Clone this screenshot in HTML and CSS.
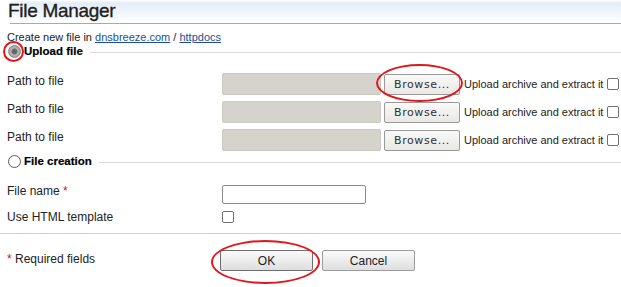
FILE: index.html
```html
<html lang="en">
<head>
    <meta charset="UTF-8">
    <title>File Manager</title>
    <link rel="stylesheet" href="styles.css">
</head>
<body>
	<div class="header">
		<h1>File Manager</h1>
	</div>

	<div class="content">
		<div class="path">Create new file in <a href="#">dnsbreeze.com</a> / <a href="#">httpdocs</a></div>

		<div class="legend">
			<span class="radio_wrap">
				<span class="radio checked"></span>
				<span class="mark mark_radio"></span>
			</span>
			<span class="legend_text">Upload file</span>
			<span class="legend_line"></span>
		</div>

		<div class="row file_row first_row">
			<label class="label">Path to file</label>
			<input type="text" class="file_input" disabled>
			<span class="btn_wrap">
				<button class="browse">Browse...</button>
				<span class="mark mark_browse"></span>
			</span>
			<span class="extract">Upload archive and extract it</span>
			<input type="checkbox" class="checkbox">
		</div>
		<div class="row file_row">
			<label class="label">Path to file</label>
			<input type="text" class="file_input" disabled>
			<button class="browse">Browse...</button>
			<span class="extract">Upload archive and extract it</span>
			<input type="checkbox" class="checkbox">
		</div>
		<div class="row file_row">
			<label class="label">Path to file</label>
			<input type="text" class="file_input" disabled>
			<button class="browse">Browse...</button>
			<span class="extract">Upload archive and extract it</span>
			<input type="checkbox" class="checkbox">
		</div>

		<div class="legend legend_create">
			<span class="radio_wrap">
				<span class="radio"></span>
			</span>
			<span class="legend_text">File creation</span>
			<span class="legend_line"></span>
		</div>

		<div class="row name_row">
			<label class="label">File name <span class="req">*</span></label>
			<input type="text" class="name_input">
		</div>
		<div class="row tpl_row">
			<label class="label">Use HTML template</label>
			<input type="checkbox" class="checkbox tpl_check">
		</div>
	</div>

	<div class="separator"></div>

	<div class="content">
		<div class="row buttons_row">
			<label class="label"><span class="req">*</span> Required fields</label>
			<span class="btn_wrap">
				<button class="btn ok">OK</button>
				<span class="mark mark_ok"></span>
			</span>
			<button class="btn cancel">Cancel</button>
		</div>
	</div>
</body>
</html>
```

FILE: styles.css
```css
	*{
		margin: 0;
		padding: 0;
		box-sizing: border-box;
	}
    body {
        font-family: "Liberation Sans", Arial, sans-serif;
        font-size: 12px;
        color: #222;
        margin: 0;
        width: 621px;
        overflow: hidden;
    }
    .header {
    	margin-left: 10px;
    	height: 24px;
    	border-bottom: 1px solid #a6aaae;
    	background: linear-gradient(to bottom, #fff 0px, #e3edf7 3px, #f3f7fb 15px, #fff 22px);
    }
    .header h1 {
    	margin-left: -2px;
    	font-size: 19px;
    	letter-spacing: -0.3px;
    	font-weight: normal;
    	line-height: 22px;
    	color: #1e1e1e;
    	-webkit-text-stroke: 0.35px #1e1e1e;
    }
    .content {
    	padding-left: 7px;
    }
    .path {
    	margin-top: 6px;
    	height: 14px;
    	line-height: 14px;
    	font-size: 11px;
    }
    .path a {
    	color: #1b4f9c;
    }
    .legend {
    	display: flex;
    	align-items: center;
    	height: 14px;
    }
    .radio_wrap {
    	position: relative;
    	display: flex;
    	width: 13px;
    	height: 13px;
    	margin-left: 1px;
    	margin-right: 3px;
    }
    .radio {
    	width: 13px;
    	height: 13px;
    	border-radius: 50%;
    	border: 1px solid #5a5a5a;
    	background: #fff;
    }
    .radio.checked {
    	border-color: #8c8c8c;
    	background: radial-gradient(circle, #5f5f5f 0, #6d6d6d 2.5px, #b8b8b8 3.5px, #9a9a9a 6px);
    }
    .legend_text {
    	font-size: 11.5px;
    	font-weight: bold;
    	color: #000;
    	-webkit-text-stroke: 0.2px #000;
    }
    .legend_line {
    	flex: 1;
    	height: 1px;
    	background-color: #d9d9d9;
    	margin-left: 7px;
    	margin-top: 2px;
    }
    .row {
    	display: flex;
    	align-items: flex-start;
    }
    .label {
    	width: 215px;
    	line-height: 14px;
    	flex-shrink: 0;
    }
    .req {
    	color: #c8102e;
    }
    .file_row {
    	height: 28px;
    }
    .first_row {
    	margin-top: 12px;
    }
    .file_row .label {
    	padding-top: 4px;
    }
    .file_input {
    	width: 159px;
    	height: 22px;
    	margin-top: 3px;
    	border: 1px solid #cbc8c1;
    	border-radius: 2px;
    	background-color: #d6d3cc;
    }
    .btn_wrap {
    	position: relative;
    	display: flex;
    }
    .browse {
    	width: 76px;
    	height: 21px;
    	margin-top: 4px;
    	margin-left: 3px;
    	font-family: "DejaVu Sans", sans-serif;
    	font-size: 11px;
    	letter-spacing: 0.6px;
    	color: #333;
    	border: 1px solid #9a9a9a;
    	border-radius: 2px;
    	background: linear-gradient(to bottom, #f9f9f8, #e9e8e5);
    }
    .extract {
    	margin-left: 4px;
    	margin-top: 7px;
    	line-height: 14px;
    	font-size: 11px;
    	white-space: nowrap;
    	width: 143px;
    }
    .checkbox {
    	appearance: none;
    	-webkit-appearance: none;
    	width: 12px;
    	height: 12px;
    	margin-top: 8px;
    	border: 1px solid #707070;
    	border-radius: 2px;
    	background: #fff;
    }
    .name_row {
    	margin-top: 15px;
    	height: 26px;
    }
    .name_row .label {
    	padding-top: 1px;
    }
    .name_input {
    	width: 144px;
    	height: 19px;
    	margin-top: 2px;
    	border: 1px solid #8a8a8a;
    	border-radius: 2px;
    	background: #fff;
    }
    .tpl_row {
    	height: 24px;
    }
    .tpl_row .label {
    	padding-top: 1px;
    }
    .tpl_check {
    	margin-top: 2px;
    }
    .separator {
    	height: 1px;
    	background-color: #cfcfcf;
    }
    .buttons_row {
    	margin-top: 16px;
    }
    .buttons_row .label {
    	padding-top: 2px;
    	width: 213px;
    }
    .btn {
    	width: 93px;
    	height: 21px;
    	font-family: "Liberation Sans", Arial, sans-serif;
    	font-size: 12px;
    	color: #222;
    	border: 1px solid #9b9b9b;
    	border-radius: 2px;
    	background: linear-gradient(to bottom, #fbfbfb, #dedede);
    }
    .ok {
    	border-color: #6e6e6e;
    }
    .cancel {
    	margin-left: 9px;
    }
    .mark {
    	position: absolute;
    	border: 2px solid #e0161b;
    	border-radius: 50%;
    }
    .mark_radio {
    	left: -5px;
    	top: -4px;
    	width: 21px;
    	height: 21px;
    }
    .mark_browse {
    	left: -5px;
    	top: -6px;
    	width: 87px;
    	height: 38px;
    }
    .mark_ok {
    	left: -9px;
    	top: -10px;
    	width: 109px;
    	height: 44px;
    }
```
